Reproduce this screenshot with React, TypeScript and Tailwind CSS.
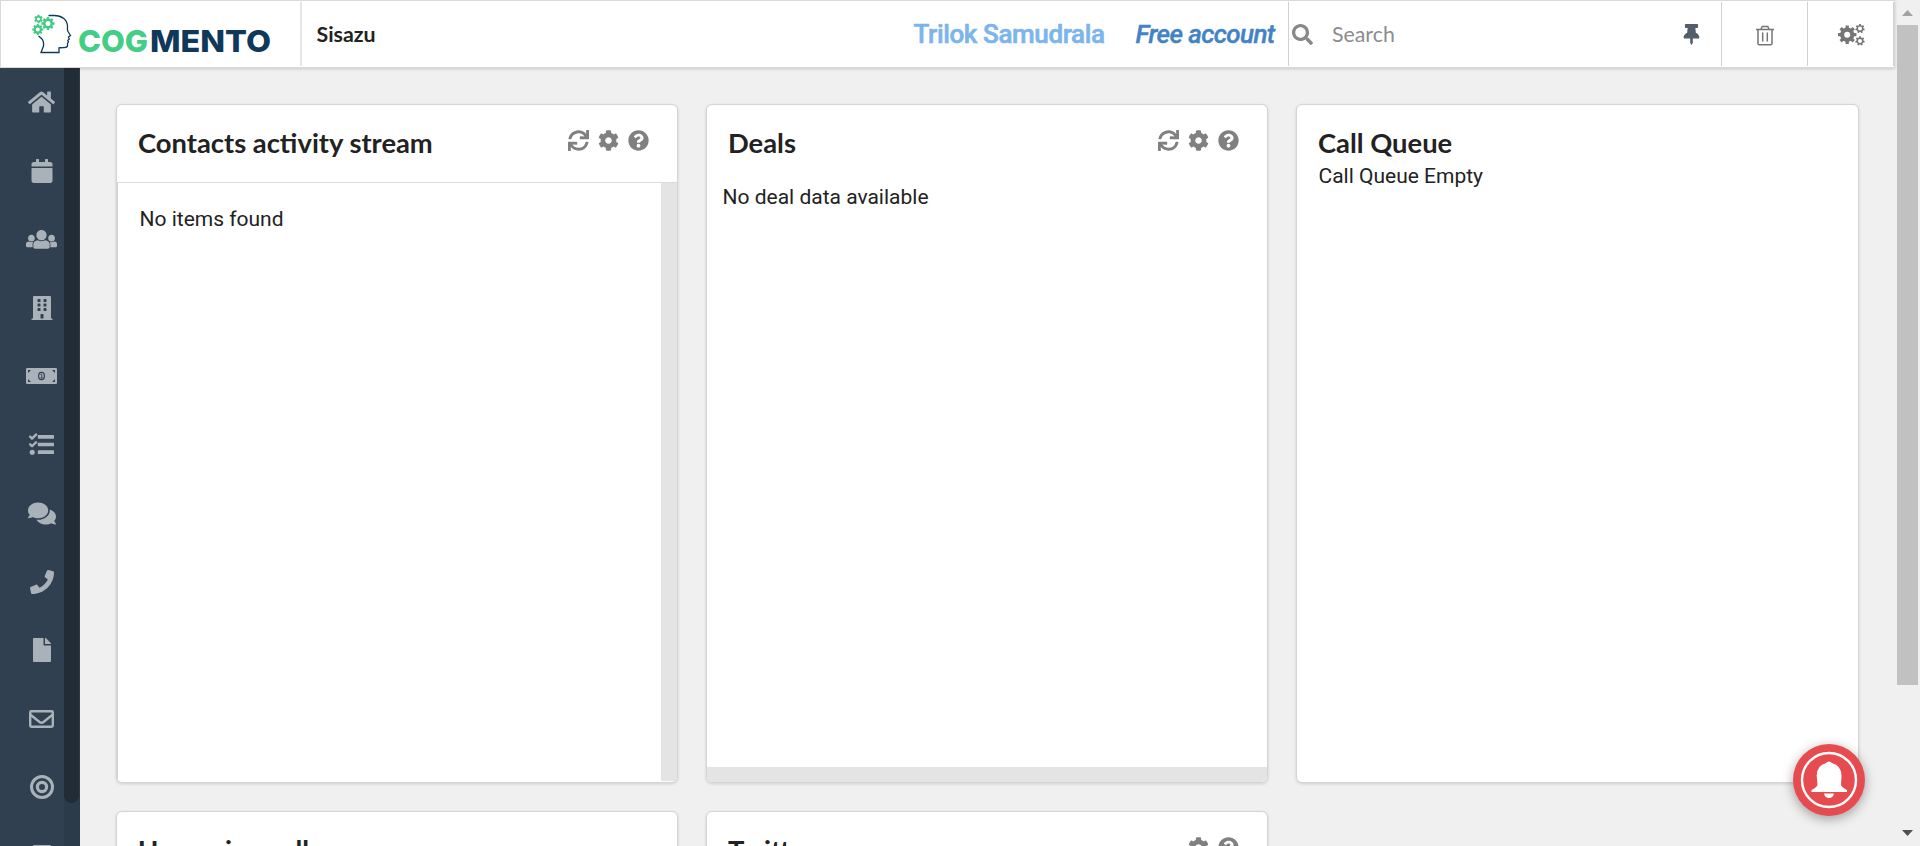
import React from "react";
import type { IconType } from "react-icons";
import {
  FaCalendar, FaBuilding, FaComments, FaPhone,
  FaFile, FaSearch, FaThumbtack, FaSync, FaCog,
  FaQuestionCircle, FaCalculator,
} from "react-icons/fa";

function HomeIcon() {
  return (
    <svg className="h-[24px] w-[27px]" viewBox="0 0 576 512" fill="currentColor">
      <path d="M488 312.700V456c0 13.300-10.700 24-24 24H348c-6.600 0-12-5.400-12-12V356c0-6.600-5.400-12-12-12h-72c-6.600 0-12 5.400-12 12v112c0 6.600-5.400 12-12 12H112c-13.300 0-24-10.700-24-24V312.700c0-3.600 1.600-7 4.400-9.300l188-154.800c4.400-3.600 10.800-3.600 15.300 0l188 154.800c2.700 2.300 4.300 5.700 4.300 9.300zm83.600-60.900L488 182.900V44.400c0-6.600-5.400-12-12-12h-56c-6.600 0-12 5.400-12 12V117l-89.500-73.700c-17.700-14.600-43.300-14.600-61 0L4.400 251.800c-5.100 4.200-5.800 11.800-1.600 16.900l25.500 31c4.200 5.100 11.800 5.800 16.900 1.600l235.200-193.700c4.400-3.600 10.800-3.600 15.300 0l235.200 193.700c5.100 4.200 12.700 3.500 16.900-1.600l25.500-31c4.200-5.200 3.400-12.700-1.700-16.900z" />
    </svg>
  );
}

function UsersIcon() {
  return (
    <svg className="h-[24.8px] w-[31px]" viewBox="0 0 640 512" fill="currentColor">
      <path d="M320 64c57.990 0 105 47.010 105 105s-47.010 105-105 105-105-47.010-105-105S262.010 64 320 64zm113.463 217.366l-39.982-9.996c-49.168 35.365-108.766 27.473-146.961 0l-39.982 9.996C174.485 289.379 152 318.177 152 351.216V412c0 19.882 16.118 36 36 36h264c19.882 0 36-16.118 36-36v-60.784c0-33.039-22.485-61.837-54.537-69.850zM528 300c38.660 0 70-31.340 70-70s-31.340-70-70-70-70 31.340-70 70 31.340 70 70 70zm-416 0c38.660 0 70-31.340 70-70s-31.340-70-70-70-70 31.340-70 70 31.340 70 70 70zm24 112v-60.784c0-16.551 4.593-32.204 12.703-45.599-29.988 14.720-63.336 8.708-85.690-7.370l-26.655 6.664C14.990 310.252 0 329.452 0 351.477V392c0 13.255 10.745 24 24 24h112.169a52.417 52.417 0 0 1-.169-4zm467.642-107.090l-26.655-6.664c-27.925 20.086-60.890 19.233-85.786 7.218C499.369 318.893 504 334.601 504 351.216V412c0 1.347-.068 2.678-.169 4H616c13.255 0 24-10.745 24-24v-40.523c0-22.025-14.990-41.225-36.358-46.567z" />
    </svg>
  );
}

function MoneyIcon() {
  return (
    <svg className="h-[16px] w-[31px]" viewBox="0 0 31 16">
      <rect width="31" height="16" rx="1.200" fill="currentColor" />
      <path d="M2 2H5L2 5ZM29 2H26L29 5ZM2 14H5L2 11ZM29 14H26L29 11Z" fill="#304050" />
      <ellipse cx="15.500" cy="8" rx="2.900" ry="3.700" fill="none" stroke="#304050" strokeWidth="1.200" />
      <path d="M14.500 6.500H15.700V10M14.300 10H17" fill="none" stroke="#304050" strokeWidth="0.900" />
    </svg>
  );
}

function TasksIcon() {
  return (
    <svg className="size-[25px]" viewBox="0 0 512 512" fill="currentColor">
      <rect x="180" y="60" width="332" height="76" rx="14" />
      <rect x="180" y="218" width="332" height="76" rx="14" />
      <rect x="180" y="376" width="332" height="76" rx="14" />
      <circle cx="66" cy="414" r="52" />
      <path d="M24 96L62 134L144 52M24 254L62 292L144 210" fill="none" stroke="currentColor" strokeWidth="50" strokeLinecap="round" strokeLinejoin="round" />
    </svg>
  );
}

function EnvelopeIcon() {
  return (
    <svg className="h-[18px] w-[25px]" viewBox="0 0 25 18" fill="none" stroke="currentColor" strokeWidth="2.400">
      <rect x="1.200" y="1.200" width="22.600" height="15.600" rx="1.200" />
      <path d="M1.500 4.800L10.500 12Q12.500 13.400 14.500 12L23.500 4.800" />
    </svg>
  );
}

function TargetIcon() {
  return (
    <svg className="size-[24px]" viewBox="0 0 24 24" fill="none" stroke="currentColor" strokeWidth="3">
      <circle cx="12" cy="12" r="10.500" />
      <circle cx="12" cy="12" r="4.600" strokeWidth="3.200" />
    </svg>
  );
}

const navItems: React.ReactNode[] = [
  <HomeIcon />,
  <FaCalendar className="h-[24px] w-[24px]" />,
  <UsersIcon />,
  <FaBuilding className="h-[24px] w-[24px]" />,
  <MoneyIcon />,
  <TasksIcon />,
  <FaComments className="h-[25px] w-[28px]" />,
  <FaPhone className="h-[24px] w-[24px]" />,
  <FaFile className="h-[24px] w-[24px]" />,
  <EnvelopeIcon />,
  <TargetIcon />,
  <FaCalculator className="h-[22px] w-[22px]" />,
];

function gearPath(cx: number, cy: number, r: number, teeth: number, hole: number) {
  const pts: string[] = [];
  const step = (Math.PI * 2) / teeth;
  for (let i = 0; i < teeth; i++) {
    const a = i * step - Math.PI / 2;
    [[-0.3, 0.76], [-0.22, 1], [0.22, 1], [0.3, 0.76]].forEach(([o, k]) => {
      pts.push(`${(cx + Math.cos(a + o * step) * r * k).toFixed(2)} ${(cy + Math.sin(a + o * step) * r * k).toFixed(2)}`);
    });
  }
  return `M${pts.join("L")}Z M${cx - hole} ${cy}a${hole} ${hole} 0 1 0 ${hole * 2} 0a${hole} ${hole} 0 1 0 ${-hole * 2} 0Z`;
}

function Logo() {
  return (
    <svg className="h-[66px] w-[299px] shrink-0" viewBox="0 0 299 66">
      <g fill="#3fcb82" fillRule="evenodd">
        <path d={gearPath(37.500, 18, 4.400, 6, 1.600)} />
        <path d={gearPath(47, 22.500, 6.600, 8, 2.500)} />
        <path d={gearPath(36.800, 28.500, 5.600, 8, 2)} />
      </g>
      <path
        d="M47.500 14.500H53C61 14.500 66.500 19 66.500 25.500C66.500 28 66 28.500 67 30.500L69.500 34.500L67.500 36L68.200 38L66.800 39.500L67.500 41L66.500 42.500V45C66.500 46.500 65 46.500 58 46.800V51.500H40L42.500 45C43 41 42.500 39.500 40.500 37.500L37.500 35"
        fill="none" stroke="#10385a" strokeWidth="1.300"
      />
      <text x="77" y="51" textLength="70" lengthAdjust="spacingAndGlyphs" fill="#43cd85" className="font-['Inter',sans-serif] text-[30.5px] font-extrabold">COG</text>
      <text x="149" y="51" textLength="121" lengthAdjust="spacingAndGlyphs" fill="#10385a" className="font-['Inter',sans-serif] text-[30.5px] font-extrabold">MENTO</text>
    </svg>
  );
}

function TrashIcon() {
  return (
    <svg className="h-[21px] w-[18px]" viewBox="0 0 18 21" fill="none" stroke="#767676" strokeWidth="1.500">
      <path d="M0 4.500H18M5 4.200L6.200 1.500H11.800L13 4.200M2 4.500V18.500Q2 19.700 3.200 19.700H14.800Q16 19.700 16 18.500V4.500M6.700 7.500V16.500M11.300 7.500V16.500" />
    </svg>
  );
}

function CogsIcon() {
  return (
    <svg className="h-[22px] w-[27px]" viewBox="0 0 27 22" fill="#767676" fillRule="evenodd">
      <path d={gearPath(9.200, 10.700, 9.400, 8, 3)} />
      <path d={gearPath(22, 4.600, 4.700, 7, 2)} />
      <path d={gearPath(22, 16.900, 4.700, 7, 2)} />
    </svg>
  );
}

function Header() {
  return (
    <header className="relative z-10 flex h-[68px] w-[1895px] shrink-0 border border-[#d9d9da] bg-white shadow-[0_1px_3px_rgba(34,36,38,0.2)]">
      <Logo />
      <div className="my-px w-[2px] bg-[#e6e6e6]" />
      <div className="flex w-[596px] items-center pl-[14.5px] pt-px font-['Lato',sans-serif] text-[21.33px] font-bold text-[#222]">Sisazu</div>
      <div className="flex flex-1 items-center pl-[15.5px] font-['Roboto',sans-serif] text-[26px]">
        <span className="w-[222px] whitespace-nowrap font-medium tracking-[-0.37px] text-[#7cb5ec] [-webkit-text-stroke:0.6px_#7cb5ec]">Trilok Samudrala</span>
        <span className="w-[152px] whitespace-nowrap font-medium italic tracking-[-0.6px] text-[#4183c4] [-webkit-text-stroke:0.4px_#4183c4]">Free account</span>
      </div>
      <div className="my-px flex w-[433px] items-center border-l border-[#d0d0d0] pl-[3px]">
        <FaSearch size={21} className="text-[#888]" />
        <span className="ml-[19px] flex-1 pt-[2px] font-['Lato',sans-serif] text-[21.33px] text-[#8c8c8c]">Search</span>
        <FaThumbtack size={21} className="mr-[19px] text-[#525f6b]" />
      </div>
      <div className="my-px flex w-[86px] items-center justify-center border-l border-[#d0d0d0] pt-[3px]"><TrashIcon /></div>
      <div className="my-px flex w-[87px] items-center justify-center border-x border-[#d0d0d0] pl-[2px] pt-[2px]"><CogsIcon /></div>
    </header>
  );
}

function Sidebar() {
  return (
    <nav className="flex w-[80px] shrink-0 bg-[#2b3b4a]">
      <div className="relative z-10 w-[64px] bg-[#304050]">
        {navItems.map((icon, i) => (
          <div key={i} className="flex h-[68.5px] w-[83px] items-center justify-center text-[#aab2b9]">
            {icon}
          </div>
        ))}
      </div>
      <div className="h-[735px] w-[15px] rounded-b-[8px] bg-[#222c36]" />
    </nav>
  );
}

interface CardProps {
  title: string;
  icons?: IconType[];
  bordered?: boolean;
  children?: React.ReactNode;
}

function Card({ title, icons = [], bordered, children }: CardProps) {
  return (
    <section className="flex h-[679px] flex-col overflow-hidden rounded-[6px] border border-[#d4d4d5] bg-white shadow-[0_1px_3px_rgba(34,36,38,0.15)]">
      <div className={bordered ? "flex h-[78px] shrink-0 border-b border-[#dcdcdc]" : "flex h-[54px] shrink-0"}>
        <h2 className="flex-1 pl-[21px] pt-[21px] font-['Lato',sans-serif] text-[27.35px] font-bold leading-[34px] text-[#222]">{title}</h2>
        <div className="flex gap-[9px] pr-[28px] pt-[25px] text-[#808080]">
          {icons.map((Icon, i) => <Icon key={i} size={21} />)}
        </div>
      </div>
      {children}
    </section>
  );
}

function PageScrollbar() {
  return (
    <div className="flex w-[25px] flex-col justify-between bg-[#f0f0f0] pl-[2px]">
      <div className="h-[685px]">
        <svg className="h-[25px] w-[21px]" viewBox="0 0 21 25"><path d="M5 16L10.500 10L16 16Z" fill="#a3a3a3" /></svg>
        <div className="h-[660px] w-[21px] bg-[#c1c1c1]" />
      </div>
      <svg className="h-[25px] w-[21px]" viewBox="0 0 21 25"><path d="M5 9L10.500 15L16 9Z" fill="#505050" /></svg>
    </div>
  );
}

export default function App() {
  return (
    <div className="relative flex h-[846px] w-[1920px] overflow-hidden bg-[#f0f0f0] font-['Roboto',sans-serif] text-[21px] text-[#222]">
      <div className="flex w-[1895px] flex-col">
        <Header />
        <div className="flex min-h-0 flex-1 overflow-hidden">
          <Sidebar />
          <main className="grid h-max grid-cols-[562px_562px_563px] gap-x-[28px] gap-y-[28px] pl-[36px] pt-[36px]">
            <Card title="Contacts activity stream" icons={[FaSync, FaCog, FaQuestionCircle]} bordered>
              <div className="flex flex-1 border-l border-[#d4d4d5] pb-px">
                <div className="flex-1 pl-[21.5px] pt-[21px]">No items found</div>
                <div className="w-[16px] bg-[#e4e4e4]" />
              </div>
            </Card>
            <Card title="Deals" icons={[FaSync, FaCog, FaQuestionCircle]}>
              <div className="flex flex-1 flex-col justify-between">
                <div className="pl-[15.5px] pt-[23px]">No deal data available</div>
                <div className="h-[15px] bg-[#e4e4e4]" />
              </div>
            </Card>
            <Card title="Call Queue">
              <div className="pl-[21.5px] pt-[2px]">Call Queue Empty</div>
            </Card>
            <Card title="Upcoming calls" />
            <Card title="Twitter" icons={[FaCog, FaQuestionCircle]} />
          </main>
        </div>
      </div>
      <PageScrollbar />
      <button className="absolute left-[1793px] top-[744px] z-20 size-[72px] rounded-full bg-[#e64c4f] shadow-[0_3px_12px_rgba(0,0,0,0.35)]">
        <svg className="size-[72px]" viewBox="0 0 72 72">
          <circle cx="36" cy="36" r="27" fill="none" stroke="#fff" strokeWidth="2.400" />
          <path d="M36 17.500Q38 17.500 38.800 19Q48.500 21.500 48.500 31.500L48 41Q49 43.500 54 46V48H18.500V46Q23.500 43.500 24.500 41L23.700 31.500Q23.700 21.500 33.200 19Q34 17.500 36 17.500ZM31 49.500H41Q40 54 36 54Q32 54 31 49.500Z" fill="#fff" />
        </svg>
      </button>
    </div>
  );
}
